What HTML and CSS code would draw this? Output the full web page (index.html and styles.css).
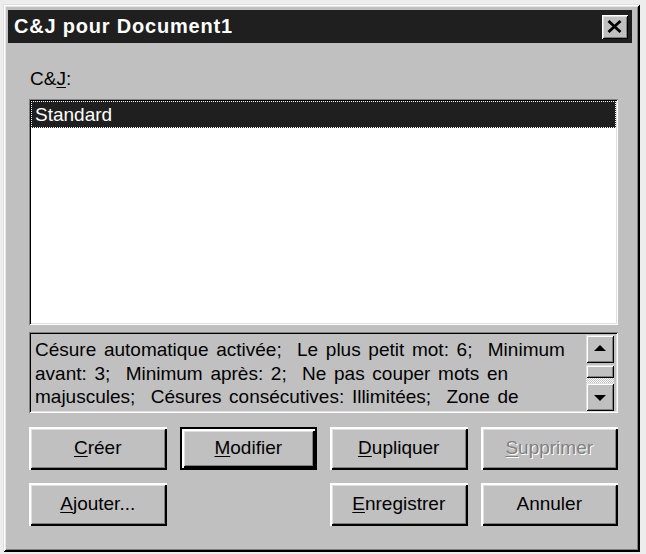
FILE: index.html
```html
<!DOCTYPE html>
<html lang="fr">
<head>
<meta charset="utf-8">
<title>C&amp;J pour Document1</title>
<link rel="stylesheet" href="styles.css">
</head>
<body>
<div class="window">
  <div class="titlebar">
    <span class="title">C&amp;J pour Document1</span>
    <button class="close" aria-label="Fermer">
      <svg width="15" height="13" viewBox="0 0 15 13">
        <path d="M1.5 1 L13.5 12 M13.5 1 L1.5 12" stroke="#000" stroke-width="2.8" fill="none"/>
      </svg>
    </button>
  </div>
  <div class="content">
    <div class="label">C&amp;<u>J</u>:</div>
    <div class="listbox">
      <div class="item selected">Standard</div>
    </div>
    <div class="descbox">
      <div class="desctext">
        <div class="line">Césure automatique activée;  Le plus petit mot: 6;  Minimum</div>
        <div class="line">avant: 3;  Minimum après: 2;  Ne pas couper mots en</div>
        <div class="line">majuscules;  Césures consécutives: Illimitées;  Zone de</div>
      </div>
      <div class="scrollbar">
        <div class="sbtn"><span class="arrow up"></span></div>
        <div class="thumb"></div>
        <div class="track"></div>
        <div class="sbtn"><span class="arrow down"></span></div>
      </div>
    </div>
    <div class="buttons">
      <button class="btn"><u>C</u>réer</button>
      <button class="btn default"><u>M</u>odifier</button>
      <button class="btn"><u>D</u>upliquer</button>
      <button class="btn disabled"><u>S</u>upprimer</button>
      <button class="btn"><u>A</u>jouter...</button>
      <span></span>
      <button class="btn"><u>E</u>nregistrer</button>
      <button class="btn">Annuler</button>
    </div>
  </div>
</div>
</body>
</html>
```

FILE: styles.css
```css
* { box-sizing: border-box; }
html, body { margin: 0; }
body {
  background: #ededed;
  padding: 4px 0 0 3px;
  font-family: "Liberation Sans", Arial, sans-serif;
  font-size: 19px;
  color: #000;
}
.window {
  width: 637px;
  height: 548px;
  background: #c0c0c0;
  box-shadow: inset 1px 1px 0 #dfdfdf, inset -1px -1px 0 #000,
              inset 2px 2px 0 #fff, inset -2px -2px 0 #000,
              inset 3px 3px 0 #e6e6e6, inset -3px -3px 0 #808080;
  padding: 6px 8px 0 5px;
}
.titlebar {
  height: 33px;
  background: #1f1f1f;
  display: flex;
  align-items: center;
  justify-content: space-between;
  padding: 0 4px 0 6px;
}
.title {
  color: #fff;
  font-weight: bold;
  font-size: 20px;
  letter-spacing: 0.8px;
}
.close {
  width: 26px;
  height: 24px;
  margin: 0;
  padding: 0 2px 1px 0;
  border: none;
  background: #c0c0c0;
  box-shadow: inset 1px 1px 0 #fff, inset -1px -1px 0 #000,
              inset 2px 2px 0 #dfdfdf, inset -2px -2px 0 #808080;
  display: flex;
  align-items: center;
  justify-content: center;
}
.content {
  padding: 0 14px 0 21px;
}
.label {
  margin-top: 25px;
  height: 31px;
  line-height: 22px;
  padding-left: 1px;
}
.label u { text-underline-offset: 2px; }
.listbox {
  height: 226px;
  background: #fff;
  box-shadow: inset 1px 1px 0 #808080, inset -1px -1px 0 #fff,
              inset 2px 2px 0 #000, inset -2px -2px 0 #dfdfdf;
  padding: 2px 2px;
}
.item {
  height: 27px;
  line-height: 25px;
  padding-left: 3px;
  white-space: nowrap;
}
.item.selected {
  background: #1f1f1f;
  color: #fff;
  border: 1px dotted #fff;
}
.descbox {
  margin-top: 7px;
  height: 81px;
  background: #c0c0c0;
  box-shadow: inset 1px 1px 0 #808080, inset -1px -1px 0 #fff,
              inset 2px 2px 0 #000, inset -2px -2px 0 #dfdfdf;
  display: flex;
  padding: 3px 4px 2px 6px;
}
.desctext {
  flex: 1;
  padding-top: 3px;
}
.line {
  white-space: pre;
  height: 23.5px;
  line-height: 23.5px;
  word-spacing: 2.4px;
}
.scrollbar {
  width: 28px;
  display: flex;
  flex-direction: column;
}
.sbtn {
  height: 28px;
  background: #c0c0c0;
  box-shadow: inset 1px 1px 0 #dfdfdf, inset -1px -1px 0 #000,
              inset 2px 2px 0 #fff, inset -2px -2px 0 #808080;
  display: flex;
  align-items: center;
  justify-content: center;
}
.thumb {
  margin-top: 2px;
  height: 13px;
  background: #c0c0c0;
  box-shadow: inset 1px 1px 0 #dfdfdf, inset -1px -1px 0 #000,
              inset 2px 2px 0 #fff, inset -2px -2px 0 #808080;
}
.track {
  flex: 1;
  background: repeating-conic-gradient(#fff 0 25%, #c0c0c0 0 50%) 0 0 / 2px 2px;
}
.arrow {
  width: 0;
  height: 0;
  border-left: 6px solid transparent;
  border-right: 6px solid transparent;
}
.arrow.up { border-bottom: 6px solid #000; margin-bottom: 2px; }
.arrow.down { border-top: 6px solid #000; margin-top: 1px; }
.buttons {
  margin-top: 14px;
  display: grid;
  grid-template-columns: repeat(4, 1fr);
  column-gap: 13px;
  row-gap: 13px;
  width: 589px;
}
.btn {
  height: 43px;
  margin: 0;
  padding: 0 0 2px;
  border: none;
  background: #c0c0c0;
  font-family: inherit;
  font-size: 19px;
  color: #000;
  box-shadow: inset 2px 2px 0 #fff, inset -2px -2px 0 #000,
              inset 3px 3px 0 #dfdfdf, inset -3px -3px 0 #808080;
}
.btn u { text-underline-offset: 2px; }
.btn.default {
  box-shadow: inset 2px 2px 0 #000, inset -2px -2px 0 #000,
              inset 4px 4px 0 #fff, inset -4px -4px 0 #000,
              inset 5px 5px 0 #dfdfdf, inset -5px -5px 0 #808080;
}
.btn.disabled {
  color: #808080;
  text-shadow: 1px 1px 0 #fff;
}
```
